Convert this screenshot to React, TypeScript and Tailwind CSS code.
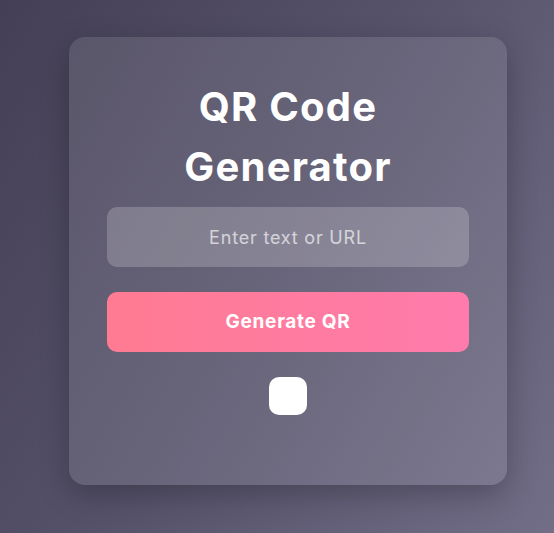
export default function App() {
  return (
    <div
      className="w-[554px] h-[533px] overflow-hidden bg-[linear-gradient(120deg,#443f55_0%,#57536b_50%,#726e88_100%)] pt-[37px] pl-[69px]"
      style={{ fontFamily: "Inter, 'Noto Sans', sans-serif" }}
    >
      <div className="w-[438px] h-[448px] rounded-[16px] bg-white/10 shadow-[0_10px_30px_rgba(0,0,0,0.25)] px-[38px] pt-[40px] flex flex-col items-center">
        <h1 className="text-[40px] leading-[60px] font-bold text-white text-center w-[260px] tracking-[1.2px]">
          QR Code Generator
        </h1>
        <input
          className="mt-[10px] w-full h-[60px] rounded-[10px] bg-white/20 text-center text-[18px] tracking-[0.8px] text-white placeholder:text-white/65 outline-none"
          placeholder="Enter text or URL"
        />
        <button className="mt-[25px] w-full h-[60px] rounded-[10px] bg-[linear-gradient(90deg,#ff7b92,#ff7bac)] text-white text-[19px] tracking-[0.7px] font-bold">
          Generate QR
        </button>
        <div className="mt-[25px] w-[38px] h-[38px] rounded-[10px] bg-white" />
      </div>
    </div>
  );
}
